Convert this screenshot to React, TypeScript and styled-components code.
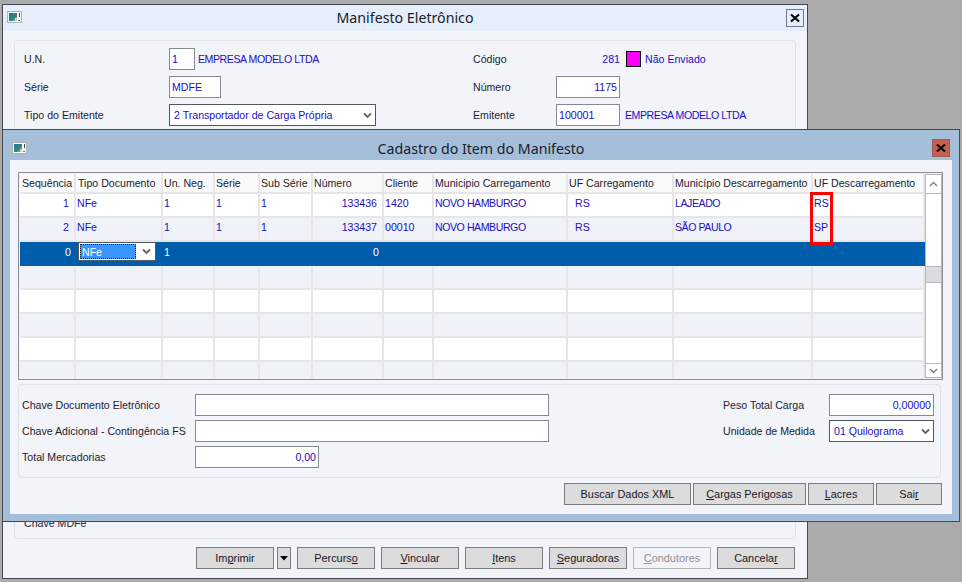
import React from "react";
import styled, { createGlobalStyle } from "styled-components";

const FONT_SIZE = "10.6px";

const Global = createGlobalStyle`
  html, body { margin: 0; padding: 0; width: 962px; height: 582px; overflow: hidden; background: #ababab; }
  * { box-sizing: border-box; }
  #root { font-family: "Liberation Sans", Arial, sans-serif; font-size: ${FONT_SIZE}; color: #1c1c30; }
`;

const Desktop = styled.div`
  position: relative;
  width: 962px;
  height: 582px;
  background: #ababab;
`;

const Window = styled.section<{ $x: number; $y: number; $w: number; $h: number; $frame: string; $front?: boolean }>`
  position: absolute;
  left: ${p => p.$x}px;
  top: ${p => p.$y}px;
  width: ${p => p.$w}px;
  height: ${p => p.$h}px;
  border: 1px solid #45494f;
  background: ${p => p.$frame};
  display: flex;
  flex-direction: column;
  padding: ${p => (p.$front ? "0 7px 7px 7px" : "0")};
`;

const TitleBar = styled.header<{ $h: number; $bg: string; $shift: string }>`
  height: ${p => p.$h}px;
  flex: none;
  background: ${p => p.$bg};
  position: relative;
  display: flex;
  align-items: center;
  justify-content: center;
  padding: ${p => p.$shift};
  font-family: "Noto Sans", sans-serif;
  font-size: 14.2px;
  color: #17202c;
`;

const TitleIcon = styled.svg<{ $left: number; $top: number }>`
  position: absolute;
  left: ${p => p.$left}px;
  top: ${p => p.$top}px;
`;

const CloseBtn = styled.button<{ $hot?: boolean; $right: number; $top: number }>`
  position: absolute;
  right: ${p => p.$right}px;
  top: ${p => p.$top}px;
  width: 18px;
  height: 18px;
  padding: 0;
  border: 1px solid ${p => (p.$hot ? "#9c5a50" : "#6f7a8a")};
  background: ${p => (p.$hot ? "#c75e50" : "#e7eefb")};
  display: flex;
  align-items: center;
  justify-content: center;
`;

const Client = styled.div<{ $pad: string }>`
  flex: 1;
  min-height: 0;
  background: #f2f4fa;
  display: flex;
  flex-direction: column;
  padding: ${p => p.$pad};
`;

const BackPanel = styled.div`
  height: 499px;
  flex: none;
  border: 1px solid #dbe4ea;
  border-radius: 4px;
  padding: 7px 0 0 9px;
  display: flex;
  flex-direction: column;
  justify-content: space-between;
`;

const BackRows = styled.div`
  display: grid;
  grid-template-columns: 145px 304px 83px 1fr;
  grid-auto-rows: 22px;
  row-gap: 6px;
  align-items: center;
`;

const Label = styled.span`
  white-space: nowrap;
`;

const Value = styled.span`
  color: #1a0fc4;
  white-space: nowrap;
`;

const Cell = styled.div`
  display: flex;
  align-items: center;
  height: 22px;
`;

const Field = styled.div<{ $w: number; $right?: boolean }>`
  width: ${p => p.$w}px;
  height: 22px;
  flex: none;
  border: 1px solid #848a92;
  background: #fff;
  color: #1a0fc4;
  display: flex;
  align-items: center;
  justify-content: ${p => (p.$right ? "flex-end" : "flex-start")};
  padding: 0 2px;
  white-space: nowrap;
`;

const SelectBox = styled(Field)`
  border-color: #54585e;
  padding: 0 0 0 4px;
  justify-content: space-between;
`;

const Chevron = styled.svg`
  margin-right: 3px;
  flex: none;
`;

const Square = styled.span`
  width: 15px;
  height: 16px;
  background: #ff00ff;
  border: 1px solid #000;
  margin: 0 4px 0 6px;
  flex: none;
`;

const ValueRight = styled(Value)`
  width: 64px;
  text-align: right;
`;

const ValueAfter = styled(Value)<{ $gap: number }>`
  margin-left: ${p => p.$gap}px;
  letter-spacing: -0.45px;
`;

const ChaveRow = styled.div`
  padding: 0 0 8px 0;
  line-height: 14px;
`;

const Buttons = styled.div<{ $gap: number; $pad: string }>`
  display: flex;
  justify-content: flex-end;
  gap: ${p => p.$gap}px;
  padding: ${p => p.$pad};
`;

const Btn = styled.button<{ $w: number; $off?: boolean; $pull?: number }>`
  width: ${p => p.$w}px;
  height: 22px;
  padding: 0;
  flex: none;
  margin-left: ${p => p.$pull ?? 0}px;
  font: inherit;
  font-size: 10.9px;
  color: ${p => (p.$off ? "#8f9196" : "#17171f")};
  border: 1px solid ${p => (p.$off ? "#b4b6b8" : "#7d7d7d")};
  background: ${p => (p.$off ? "#f2f4fa" : "#dcdcdc")};
  display: flex;
  align-items: center;
  justify-content: center;
  u { text-underline-offset: 1px; }
`;

const GridFrame = styled.div`
  height: 208px;
  flex: none;
  border: 1px solid #8a8f96;
  padding: 1px;
  display: flex;
  background: #f2f4fa;
`;

const GridBody = styled.div`
  width: 905px;
  flex: none;
  display: flex;
  flex-direction: column;
  overflow: hidden;
`;

const COLS = "56px 87px 52px 45px 53px 71px 50px 134px 106px 139px 112px";

const Row = styled.div<{ $h?: number }>`
  display: grid;
  grid-template-columns: ${COLS};
  height: ${p => p.$h ?? 24}px;
  flex: none;
`;

const Head = styled.div<{ $pad: number }>`
  background: #fafafa;
  border-right: 2px solid #e6e6e6;
  border-bottom: 2px solid #e6e6e6;
  padding-left: ${p => p.$pad}px;
  display: flex;
  align-items: center;
  white-space: nowrap;
  color: #1c1c30;
`;

const Td = styled.div<{ $alt?: boolean; $sel?: boolean; $right?: boolean; $pad?: number; $caps?: boolean }>`
  background: ${p => (p.$sel ? "#005dab" : p.$alt ? "#f0f2f9" : "#fff")};
  color: ${p => (p.$sel ? "#fff" : "#1a0fc4")};
  border-right: ${p => (p.$sel ? "0" : "2px solid #e6e6e6")};
  border-bottom: ${p => (p.$sel ? "0" : "2px solid #e6e6e6")};
  padding: 0 ${p => (p.$right ? "5px" : "0")} 4px ${p => p.$pad ?? 1}px;
  display: flex;
  align-items: center;
  justify-content: ${p => (p.$right ? "flex-end" : "flex-start")};
  white-space: nowrap;
  position: relative;
  letter-spacing: ${p => (p.$caps ? "-0.45px" : "0")};
`;

const CellSelect = styled.div`
  position: absolute;
  left: 2px;
  top: 0;
  width: 78px;
  height: 19px;
  background: #fff;
  border: 1px solid #54585e;
  padding: 1px;
  display: flex;
  align-items: center;
  justify-content: space-between;
`;

const CellSelectText = styled.span`
  width: 56px;
  height: 15px;
  background: #3a96ff;
  color: #fff;
  outline: 1px dotted #20262e;
  outline-offset: -1px;
  display: flex;
  align-items: center;
  padding-left: 2px;
`;

const ScrollBar = styled.div`
  width: 17px;
  flex: none;
  background: #fff;
  display: flex;
  flex-direction: column;
  align-items: stretch;
  border-left: 1px solid #b4b7bb;
  border-right: 1px solid #b4b7bb;
`;

const ScrollBtn = styled.div<{ $h: number }>`
  height: ${p => p.$h}px;
  flex: none;
  border-top: 1px solid #b4b7bb;
  border-bottom: 1px solid #b4b7bb;
  background: #fff;
  display: flex;
  align-items: center;
  justify-content: center;
`;

const ScrollTrack = styled.div`
  flex: 1;
  padding-top: 72px;
`;

const Thumb = styled.div`
  height: 17px;
  background: #dcdcdc;
  border-top: 1px solid #b4b7bb;
  border-bottom: 1px solid #b4b7bb;
`;

const FormPanel = styled.div`
  height: 94px;
  flex: none;
  margin: 4px 2px 0 0;
  border: 1px solid #dbe4ea;
  border-radius: 4px;
  padding: 9px 6px 0 3px;
  display: flex;
  justify-content: space-between;
`;

const FormCol = styled.div<{ $cols: string }>`
  display: grid;
  grid-template-columns: ${p => p.$cols};
  grid-auto-rows: 22px;
  row-gap: 4px;
  align-items: center;
  align-content: start;
`;

const Highlight = styled.div`
  position: absolute;
  left: 810px;
  top: 192px;
  width: 23px;
  height: 53px;
  border: 3px solid #ff0000;
  pointer-events: none;
`;

const WinIcon = ({ left, top }: { left: number; top: number }) => (
  <TitleIcon width="15" height="12" viewBox="0 0 15 12" $left={left} $top={top}>
    <defs>
      <linearGradient id="winIconFill" x1="0" y1="0" x2="1" y2="1">
        <stop offset="0" stopColor="#2f6fa0" />
        <stop offset="0.6" stopColor="#2a8a72" />
        <stop offset="1" stopColor="#a8c8b8" />
      </linearGradient>
    </defs>
    <rect x="0.5" y="0.5" width="14" height="11" fill="#f7f8f8" stroke="#aeb2b4" />
    <rect x="2" y="2" width="8" height="8" fill="url(#winIconFill)" />
    <rect x="8" y="7" width="2" height="3" fill="#c9d2d0" />
    <rect x="12" y="2" width="1" height="4" fill="#3c4248" />
    <rect x="11" y="9" width="2" height="1" fill="#70767a" />
  </TitleIcon>
);

const X = () => (
  <svg width="10" height="10" viewBox="0 0 10 10">
    <path d="M1 1.5 L9 8.5 M9 1.5 L1 8.5" stroke="#000" strokeWidth="2.2" fill="none" />
  </svg>
);

const Down = () => (
  <Chevron width="9" height="7" viewBox="0 0 9 7">
    <path d="M1 1.5 L4.5 5 L8 1.5" stroke="#5f6368" strokeWidth="1.8" fill="none" />
  </Chevron>
);

const ArrowGlyph = ({ up }: { up?: boolean }) => (
  <svg width="9" height="6" viewBox="0 0 9 6">
    <path d={up ? "M1 5 L4.5 1.5 L8 5" : "M1 1 L4.5 4.5 L8 1"} stroke="#7d8085" strokeWidth="1.4" fill="none" />
  </svg>
);

const HEADERS = [
  "Sequência", "Tipo Documento", "Un. Neg.", "Série", "Sub Série", "Número", "Cliente",
  "Municipio Carregamento", "UF Carregamento", "Município Descarregamento", "UF Descarregamento",
];

const DATA = [
  ["1", "NFe", "1", "1", "1", "133436", "1420", "NOVO HAMBURGO", "RS", "LAJEADO", "RS"],
  ["2", "NFe", "1", "1", "1", "133437", "00010", "NOVO HAMBURGO", "RS", "SÃO PAULO", "SP"],
];

export default function App() {
  return (
    <Desktop>
      <Global />
      <Window $x={2} $y={4} $w={806} $h={575} $frame="#f2f4fa">
        <TitleBar $h={26} $bg="#e7eefb" $shift="0 0 2px">
          Manifesto Eletrônico
          <WinIcon left={4} top={6} />
          <CloseBtn $right={3} $top={4}><X /></CloseBtn>
        </TitleBar>
        <Client $pad="9px 11px 0 11px">
          <BackPanel>
            <BackRows>
              <Label>U.N.</Label>
              <Cell>
                <Field $w={26}>1</Field>
                <ValueAfter $gap={3}>EMPRESA MODELO LTDA</ValueAfter>
              </Cell>
              <Label>Código</Label>
              <Cell>
                <ValueRight>281</ValueRight>
                <Square />
                <Value>Não Enviado</Value>
              </Cell>

              <Label>Série</Label>
              <Cell><Field $w={52}>MDFE</Field></Cell>
              <Label>Número</Label>
              <Cell><Field $w={64} $right>1175</Field></Cell>

              <Label>Tipo do Emitente</Label>
              <Cell>
                <SelectBox $w={207}>2 Transportador de Carga Própria<Down /></SelectBox>
              </Cell>
              <Label>Emitente</Label>
              <Cell>
                <Field $w={64}>100001</Field>
                <ValueAfter $gap={5}>EMPRESA MODELO LTDA</ValueAfter>
              </Cell>
            </BackRows>
            <ChaveRow>Chave MDFe</ChaveRow>
          </BackPanel>
          <Buttons $gap={6} $pad="8px 1px 0 0">
            <Btn $w={78}><span>Im<u>p</u>rimir</span></Btn>
            <Btn $w={14} $pull={-3}>
              <svg width="8" height="5" viewBox="0 0 8 5"><path d="M0 0 H8 L4 4.5 Z" fill="#000" /></svg>
            </Btn>
            <Btn $w={78}><span>Percurs<u>o</u></span></Btn>
            <Btn $w={78}><span><u>V</u>incular</span></Btn>
            <Btn $w={78}><span><u>I</u>tens</span></Btn>
            <Btn $w={78}><span><u>S</u>eguradoras</span></Btn>
            <Btn $w={78} $off><span><u>C</u>ondutores</span></Btn>
            <Btn $w={78}><span>Cancela<u>r</u></span></Btn>
          </Buttons>
        </Client>
      </Window>

      <Window $x={2} $y={129} $w={958} $h={393} $frame="#a5bfdb" $front>
        <TitleBar $h={30} $bg="#a5bfdb" $shift="6px 0 0">
          Cadastro do Item do Manifesto
          <WinIcon left={2} top={12} />
          <CloseBtn $hot $right={2} $top={9}><X /></CloseBtn>
        </TitleBar>
        <Client $pad="12px 9px 0 8px">
          <GridFrame>
            <GridBody>
              <Row $h={20}>
                {HEADERS.map((h, i) => <Head key={h} $pad={i < 2 ? 2 : 1}>{h}</Head>)}
              </Row>
              {DATA.map((r, i) => (
                <Row key={r[0]}>
                  {r.map((v, c) => (
                    <Td
                      key={c}
                      $alt={i === 1}
                      $right={c === 0 || c === 5}
                      $pad={c === 8 ? 7 : 1}
                      $caps={c === 7 || c === 9}
                    >
                      {v}
                    </Td>
                  ))}
                </Row>
              ))}
              <Row>
                {["0", "", "1", "", "", "0", "", "", "", "", ""].map((v, c) => (
                  <Td key={c} $sel $right={c === 0 || c === 5}>
                    {c === 1 ? (
                      <CellSelect>
                        <CellSelectText>NFe</CellSelectText>
                        <Down />
                      </CellSelect>
                    ) : v}
                  </Td>
                ))}
              </Row>
              {[0, 1, 2, 3, 4].map(i => (
                <Row key={i}>
                  {HEADERS.map(h => <Td key={h} $alt={i % 2 === 0} />)}
                </Row>
              ))}
            </GridBody>
            <ScrollBar>
              <ScrollBtn $h={20}><ArrowGlyph up /></ScrollBtn>
              <ScrollTrack><Thumb /></ScrollTrack>
              <ScrollBtn $h={15}><ArrowGlyph /></ScrollBtn>
            </ScrollBar>
          </GridFrame>
          <FormPanel>
            <FormCol $cols="173px auto">
              <Label>Chave Documento Eletrônico</Label>
              <Field $w={354} />
              <Label>Chave Adicional - Contingência FS</Label>
              <Field $w={354} />
              <Label>Total Mercadorias</Label>
              <Field $w={124} $right>0,00</Field>
            </FormCol>
            <FormCol $cols="106px auto">
              <Label>Peso Total Carga</Label>
              <Field $w={105} $right>0,00000</Field>
              <Label>Unidade de Medida</Label>
              <SelectBox $w={105}>01 Quilograma<Down /></SelectBox>
            </FormCol>
          </FormPanel>
          <Buttons $gap={2} $pad="5px 1px 0 0">
            <Btn $w={127}><span>Buscar Dados XML</span></Btn>
            <Btn $w={113}><span><u>C</u>argas Perigosas</span></Btn>
            <Btn $w={66}><span><u>L</u>acres</span></Btn>
            <Btn $w={66}><span>Sai<u>r</u></span></Btn>
          </Buttons>
        </Client>
      </Window>
      <Highlight />
    </Desktop>
  );
}
